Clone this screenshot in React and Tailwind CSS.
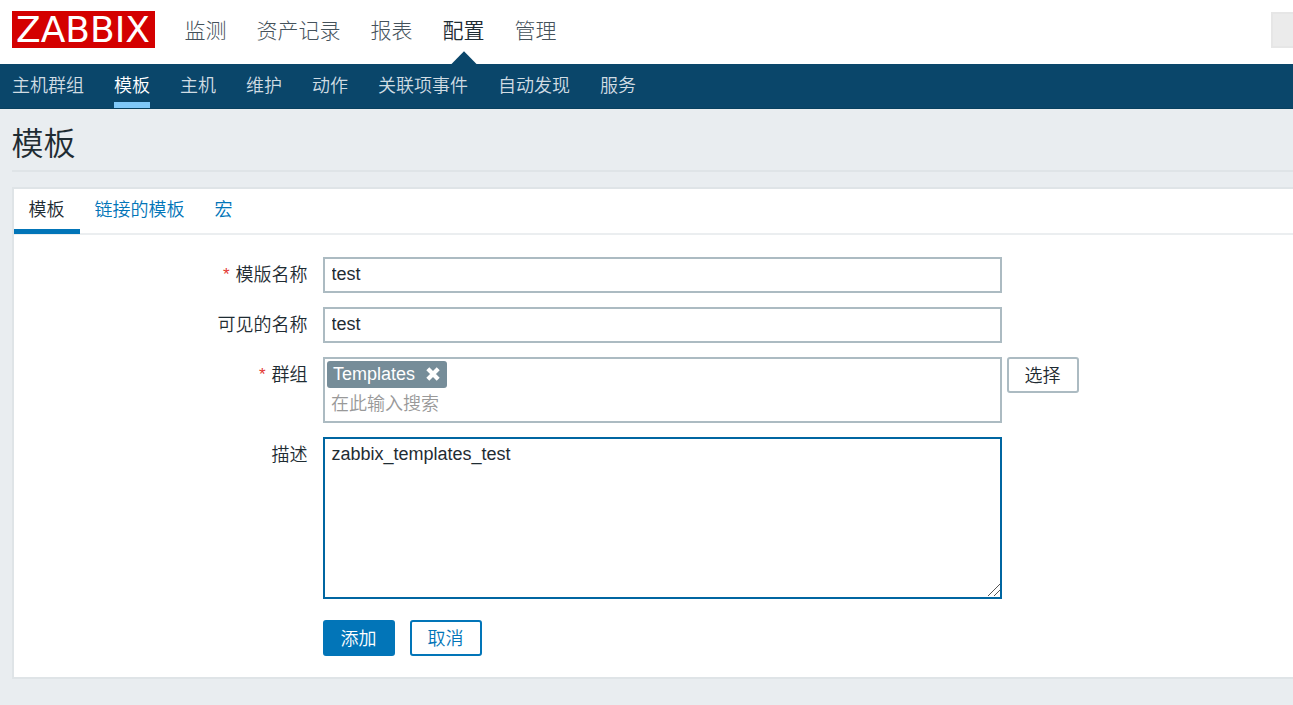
import { useState } from "react";

const mainMenu = ["监测", "资产记录", "报表", "配置", "管理"];
const subMenu = ["主机群组", "模板", "主机", "维护", "动作", "关联项事件", "自动发现", "服务"];
const tabs = ["模板", "链接的模板", "宏"];

function Header() {
  return (
    <header className="flex h-16 items-start justify-between bg-white pl-3">
      <div className="flex">
        <div className="mt-[11px] mr-[30px] h-[37px] w-[142.5px] bg-[#d40000] pl-[4px] font-['DejaVu_Sans'] text-[36px] leading-[37px] font-normal whitespace-nowrap text-white">
          ZABBIX
        </div>
        <nav className="flex gap-[30px] text-[21px] leading-[62px]">
          {mainMenu.map((item) => (
            <a
              key={item}
              className={
                item === "配置"
                  ? "relative h-16 text-[#1f2c33]"
                  : "h-16 font-light text-[#45525b]"
              }
            >
              {item}
              {item === "配置" && (
                <svg className="absolute bottom-0 left-[8px]" width="26" height="13" viewBox="0 0 26 13">
                  <path d="M0.5 13 L13 0.2 L25.5 13 Z" fill="#0a466a" />
                </svg>
              )}
            </a>
          ))}
        </nav>
      </div>
      <div className="mt-3 h-9 w-[22px] border-2 border-r-0 border-[#e6e6e6] bg-[#ebebeb]" />
    </header>
  );
}

function SubNav() {
  return (
    <nav className="flex h-[45px] gap-[30px] border-b border-[#08405f] bg-[#0a466a] pl-3 text-[18px] leading-[45px]">
      {subMenu.map((item) => (
        <a
          key={item}
          className={
            item === "模板"
              ? "h-[44px] border-b-6 border-[#7fc8f8] text-white"
              : "h-[44px] text-[#d0dce3]"
          }
        >
          {item}
        </a>
      ))}
    </nav>
  );
}

function Row({ label, required, children }) {
  return (
    <div className="flex">
      <div className="mr-[15.5px] w-[293.5px] text-right leading-[36px]">
        {required && (
          <span className="mr-[6px] align-[1px] text-[17px] leading-none text-[#e33734]">*</span>
        )}
        {label}
      </div>
      {children}
    </div>
  );
}

function App() {
  const [name, setName] = useState("test");
  const [visibleName, setVisibleName] = useState("test");
  const [description, setDescription] = useState("zabbix_templates_test");

  return (
    <div className="h-[705px] overflow-hidden bg-[#e9edf0] font-['Liberation_Sans','Noto_Sans_CJK_SC',sans-serif] text-[18px] font-[350] text-[#1f2c33]">
      <Header />
      <SubNav />
      <main className="pl-3">
        <h1 className="h-[63px] border-b-2 border-[#dfe4e7] text-[32px] leading-[70px]">
          <span className="-ml-[0.5px]">模板</span>
        </h1>
        <section className="mt-[15px] h-[492px] border-2 border-r-0 border-[#dfe4e7] bg-white">
          <div className="flex h-[46px] border-b-2 border-[#ebeef0] leading-[43px]">
            {tabs.map((tab, i) => (
              <a
                key={tab}
                className={
                  i === 0
                    ? "h-[45px] border-b-5 border-[#0275b8] pr-[15.5px] pl-[14.5px]"
                    : "pr-[15.5px] pl-[14.5px] text-[#0275b8]"
                }
              >
                {tab}
              </a>
            ))}
          </div>

          <form className="flex flex-col gap-[14px] pt-[22px]">
            <Row label="模版名称" required>
              <input
                className="h-9 w-[679px] border-2 border-[#acbbc2] px-[6.5px] pb-[1px] outline-none"
                value={name}
                onChange={(e) => setName(e.target.value)}
              />
            </Row>
            <Row label="可见的名称">
              <input
                className="h-9 w-[679px] border-2 border-[#acbbc2] px-[6.5px] pb-[1px] outline-none"
                value={visibleName}
                onChange={(e) => setVisibleName(e.target.value)}
              />
            </Row>
            <Row label="群组" required>
              <div className="h-[66px] w-[679px] border-2 border-[#acbbc2] px-[2px] pt-[2px]">
                <div className="flex h-[27px] w-[120px] items-center justify-between rounded-[3px] bg-[#768d99] pr-[7px] pl-[6px] leading-[27px] text-white">
                  <span>Templates</span>
                  <svg
                    className="mb-[2px]"
                    width="14"
                    height="14"
                    viewBox="0 0 14 14"
                    stroke="#fff"
                    strokeWidth="4.2"
                  >
                    <path d="M1.8 1.8 L12.2 12.2 M12.2 1.8 L1.8 12.2" />
                  </svg>
                </div>
                <div className="pl-1 leading-[33px] text-[#999]">在此输入搜索</div>
              </div>
              <button
                type="button"
                className="ml-[5px] h-9 w-[72px] rounded-[3px] border-2 border-[#acbbc2] bg-white pr-px leading-[34px]"
              >
                选择
              </button>
            </Row>
            <Row label="描述">
              <div className="relative h-[162px] w-[679px]">
                <textarea
                  className="h-full w-full resize-none border-2 border-[#0066a1] px-[6.5px] pt-[3px] leading-[24px] outline-none"
                  value={description}
                  onChange={(e) => setDescription(e.target.value)}
                />
                <svg
                  className="pointer-events-none absolute right-[2px] bottom-[3px]"
                  width="12"
                  height="12"
                  viewBox="0 0 12 12"
                  stroke="#555"
                  strokeWidth="1"
                >
                  <path d="M0 12 L12 0 M6 12 L12 6" />
                </svg>
              </div>
            </Row>
            <div className="mt-[7px] ml-[309px] flex gap-[15px]">
              <button
                type="button"
                className="h-9 w-[72px] rounded-[3px] border-2 border-[#0275b8] bg-[#0275b8] pr-px leading-[34px] text-white"
              >
                添加
              </button>
              <button
                type="button"
                className="h-9 w-[72px] rounded-[3px] border-2 border-[#0275b8] bg-white pr-px leading-[34px] text-[#0275b8]"
              >
                取消
              </button>
            </div>
          </form>
        </section>
      </main>
    </div>
  );
}

export default App;
